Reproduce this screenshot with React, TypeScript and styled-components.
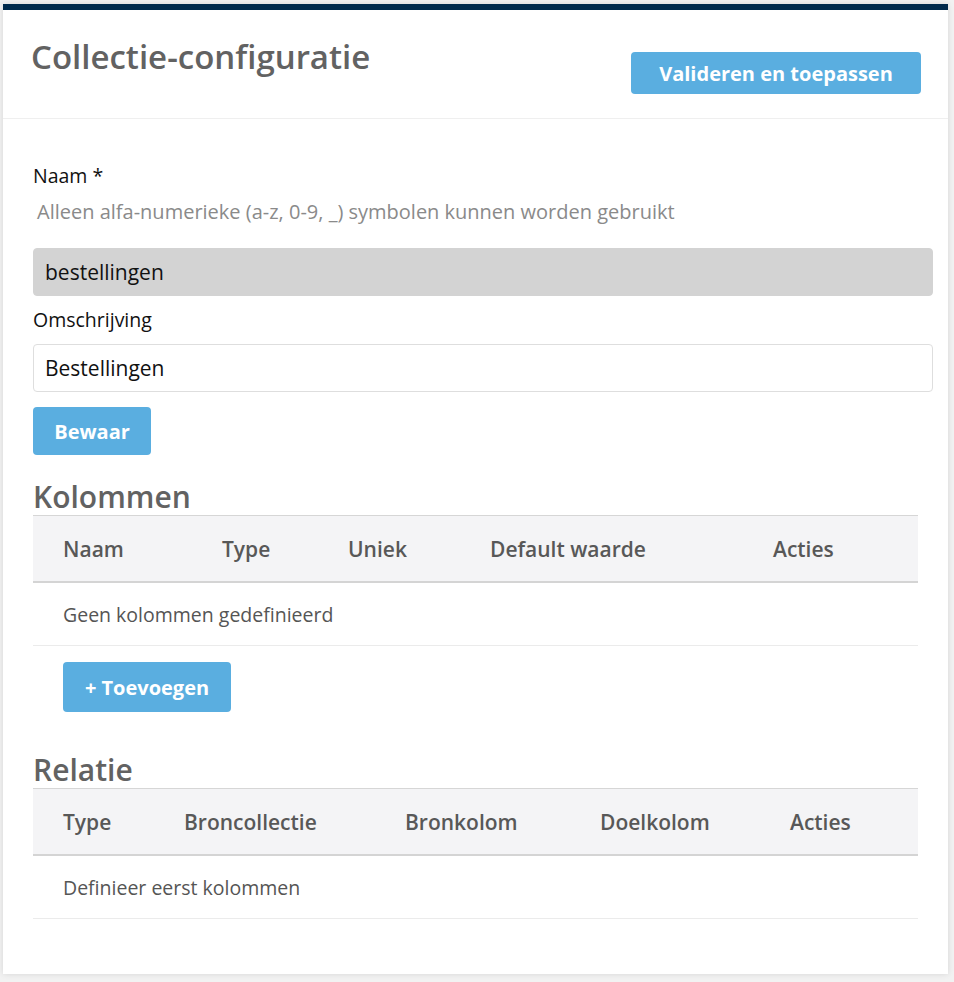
import React from "react";
import styled, { createGlobalStyle } from "styled-components";

const GlobalStyle = createGlobalStyle`
  html, body {
    margin: 0;
    padding: 0;
    background: #f2f2f2;
    font-family: "Open Sans", "Noto Sans", sans-serif;
  }
  * {
    box-sizing: border-box;
  }
`;

const Page = styled.div`
  padding: 4px 6px 9px 3px;
`;

const Card = styled.div`
  background: #ffffff;
  border-top: 6px solid #002a4c;
  box-shadow: 0 0 6px rgba(0, 0, 0, 0.12);
  padding-bottom: 55px;
`;

const Header = styled.div`
  display: flex;
  justify-content: space-between;
  align-items: flex-start;
  height: 109px;
  padding: 27px 27px 0 28px;
  border-bottom: 1px solid #efefef;
`;

const Title = styled.h1`
  margin: 0;
  font-size: 33px;
  line-height: 40px;
  font-weight: 600;
  color: #626262;
`;

const Button = styled.button<{ $h: number; $w: number }>`
  height: ${(p) => p.$h}px;
  width: ${(p) => p.$w}px;
  background: #5aaee0;
  color: #ffffff;
  border: none;
  border-radius: 4px;
  font-family: "Open Sans", sans-serif;
  font-size: 20px;
  font-weight: 700;
  padding: 0;
  cursor: pointer;
`;

const HeaderButton = styled(Button)`
  margin-top: 15px;
`;

const Body = styled.div`
  padding: 0 15px 0 30px;
`;

const Label = styled.div<{ $top: number }>`
  margin-top: ${(p) => p.$top}px;
  font-size: 19.5px;
  line-height: 24px;
  color: #111;
`;

const Help = styled.div`
  margin-top: 12px;
  padding-left: 4px;
  font-size: 20px;
  line-height: 24px;
  color: #8a8a8a;
`;

const Input = styled.input<{ $top: number }>`
  display: block;
  width: 100%;
  height: 48px;
  margin-top: ${(p) => p.$top}px;
  padding: 0 11px;
  border: 1px solid #dedede;
  border-radius: 4px;
  font-family: "Open Sans", sans-serif;
  font-size: 21px;
  color: #111;
  background: #fff;
  &:disabled {
    background: #d3d3d3;
    border-color: #d3d3d3;
    color: #111;
  }
`;

const SaveButton = styled(Button)`
  margin-top: 15px;
  display: block;
`;

const Section = styled.h2<{ $top: number }>`
  margin: ${(p) => p.$top}px 0 1px;
  font-size: 30px;
  line-height: 34px;
  font-weight: 600;
  color: #626262;
`;

const Table = styled.div`
  margin-right: 15px;
`;

const HeadRow = styled.div<{ $cols: string }>`
  display: grid;
  grid-template-columns: ${(p) => p.$cols};
  align-items: center;
  height: 68px;
  padding-left: 30px;
  background: #f4f4f6;
  border-top: 1px solid #d6d6d6;
  border-bottom: 2px solid #d4d4d4;
`;

const HeadCell = styled.div`
  font-size: 21px;
  font-weight: 600;
  color: #585858;
`;

const EmptyRow = styled.div`
  display: flex;
  align-items: center;
  height: 63px;
  padding-left: 30px;
  border-bottom: 1px solid #ebebeb;
  font-size: 19.5px;
  color: #555;
`;

const AddButton = styled(Button)`
  display: block;
  margin: 16px 0 0 30px;
`;

const kolommen = ["Naam", "Type", "Uniek", "Default waarde", "Acties"];
const relaties = ["Type", "Broncollectie", "Bronkolom", "Doelkolom", "Acties"];

export default function App() {
  return (
    <Page>
      <GlobalStyle />
      <Card>
        <Header>
          <Title>Collectie-configuratie</Title>
          <HeaderButton $h={42} $w={290}>
            Valideren en toepassen
          </HeaderButton>
        </Header>
        <Body>
          <Label $top={45}>Naam *</Label>
          <Help>Alleen alfa-numerieke (a-z, 0-9, _) symbolen kunnen worden gebruikt</Help>
          <Input $top={24} value="bestellingen" disabled readOnly />
          <Label $top={12}>Omschrijving</Label>
          <Input $top={12} defaultValue="Bestellingen" />
          <SaveButton $h={48} $w={118}>
            Bewaar
          </SaveButton>

          <Section $top={25}>Kolommen</Section>
          <Table>
            <HeadRow $cols="159px 126px 142px 283px 1fr">
              {kolommen.map((k) => (
                <HeadCell key={k}>{k}</HeadCell>
              ))}
            </HeadRow>
            <EmptyRow>Geen kolommen gedefinieerd</EmptyRow>
          </Table>
          <AddButton $h={50} $w={168}>+ Toevoegen</AddButton>

          <Section $top={41}>Relatie</Section>
          <Table>
            <HeadRow $cols="121px 221px 195px 190px 1fr">
              {relaties.map((k) => (
                <HeadCell key={k}>{k}</HeadCell>
              ))}
            </HeadRow>
            <EmptyRow>Definieer eerst kolommen</EmptyRow>
          </Table>
        </Body>
      </Card>
    </Page>
  );
}
